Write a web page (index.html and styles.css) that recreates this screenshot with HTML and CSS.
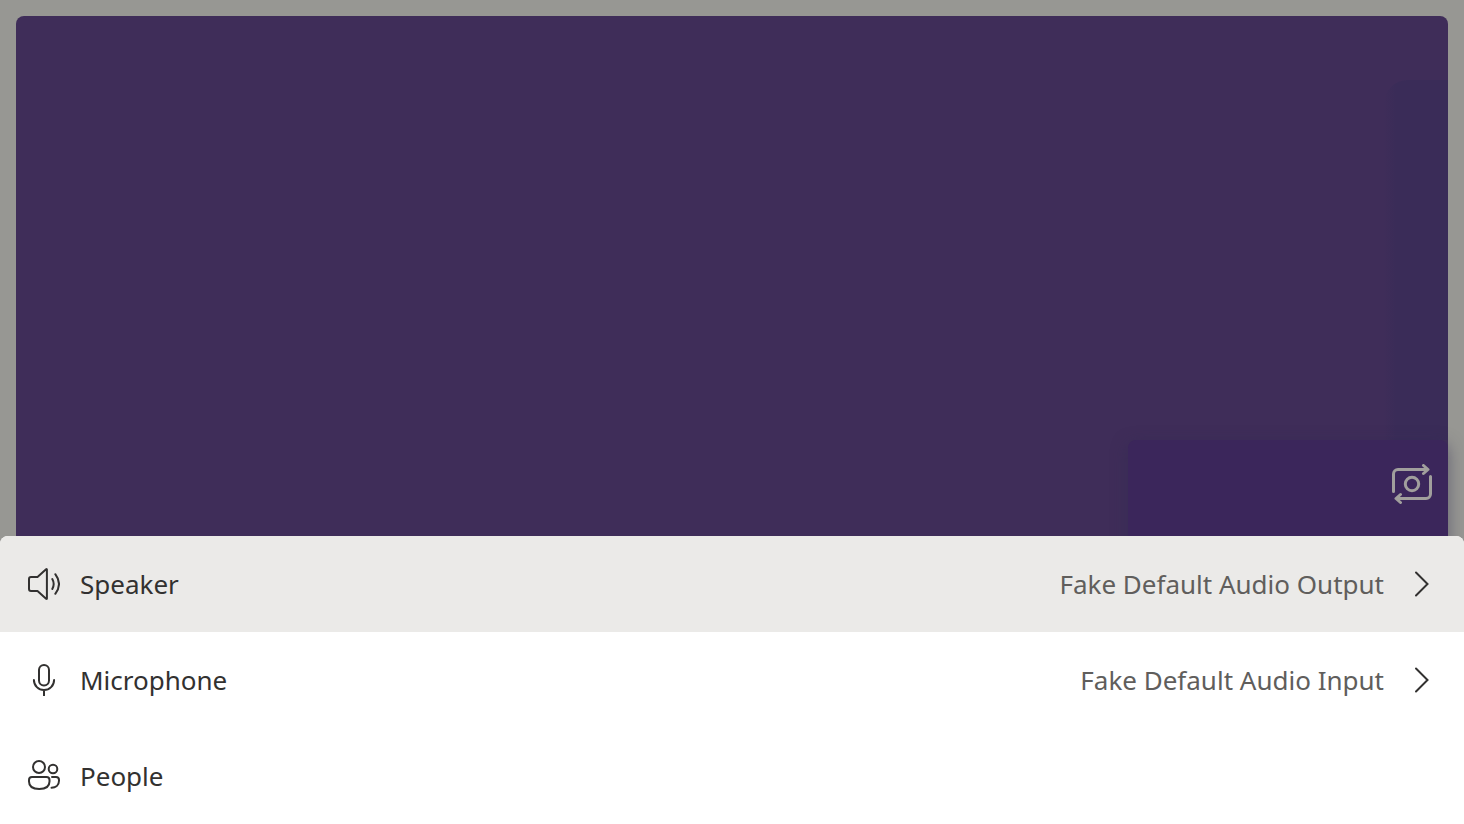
FILE: index.html
```
<!DOCTYPE html>
<html lang="en">
<head>
<meta charset="utf-8">
<meta name="viewport" content="width=device-width, initial-scale=1">
<title>Call</title>
<link rel="stylesheet" href="styles.css">
</head>
<body>
<main class="call">
  <section class="video" aria-label="Remote video">
    <div class="video-edge"></div>
    <div class="preview">
      <button class="flip" type="button" aria-label="Switch camera">
        <svg class="flip-icon" viewBox="0 0 40 40" aria-hidden="true">
          <path d="M1.500 27.500V10a4.500 4.500 0 0 1 4.500-4.500h29M31.500 1.500l4.500 4-4.500 4M38.500 12.500V30a4.500 4.500 0 0 1-4.500 4.500H5M8.500 30.500l-4.500 4 4.500 4"/>
          <circle cx="20" cy="20" r="6.700"/>
        </svg>
      </button>
    </div>
  </section>
</main>
<div class="sheet" role="menu">
  <button class="row row-active" type="button" role="menuitem">
    <svg class="icon" viewBox="0 0 32 32" aria-hidden="true">
      <path d="M18.900 1.600v28.800q0 .9-.8.300L9.500 23H3q-2 0-2-2V11q0-2 2-2h6.500l8.600-7.700q.8-.6.8.3Z"/>
      <path d="M24.300 11q2.800 5 0 10M27.300 6.200q7.400 9.800 0 19.600"/>
    </svg>
    <span class="label">Speaker</span>
    <span class="value">Fake Default Audio Output</span>
    <svg class="chevron" viewBox="0 0 16 28" aria-hidden="true"><path d="M2 2.500L13.500 14 2 25.500"/></svg>
  </button>
  <button class="row" type="button" role="menuitem">
    <svg class="icon" viewBox="0 0 32 32" aria-hidden="true">
      <rect x="11" y="1" width="10" height="20.500" rx="5"/>
      <path d="M5.900 16a10.100 10.100 0 0 0 20.200 0M16 26.200V31.500"/>
    </svg>
    <span class="label">Microphone</span>
    <span class="value">Fake Default Audio Input</span>
    <svg class="chevron" viewBox="0 0 16 28" aria-hidden="true"><path d="M2 2.500L13.500 14 2 25.500"/></svg>
  </button>
  <button class="row" type="button" role="menuitem">
    <svg class="icon" viewBox="0 0 32 32" aria-hidden="true">
      <circle cx="11" cy="7" r="6"/>
      <circle cx="25" cy="9" r="4.300"/>
      <path d="M4 17H18.500q3 0 3 3v1.500C21.500 26.500 17.500 29 11.200 29S1 26.500 1 21.500V20q0-3 3-3ZM24 17H28q3 0 3 3v.8c0 4.600-3.500 6.900-7.500 6.900"/>
    </svg>
    <span class="label">People</span>
  </button>
</div>
</body>
</html>
```
FILE: styles.css
```
* {
  box-sizing: border-box;
}

body {
  margin: 0;
  height: 100vh;
  overflow: hidden;
  background: #979793;
  color: #323130;
  font-family: "Segoe UI", "Noto Sans", "Open Sans", sans-serif;
}

button {
  border: 0;
  margin: 0;
  background: none;
  color: inherit;
  font: inherit;
}

.call {
  display: flex;
  height: 100%;
  padding: 16px;
}

.video {
  position: relative;
  flex: 1;
  border-radius: 8px;
  background: #3f2d59;
}

.video-edge {
  position: absolute;
  top: 64px;
  right: 0;
  width: 64px;
  height: 360px;
  border-radius: 24px 0 0 0;
  background: linear-gradient(to right, #3f2d59, #3a2c58 12px);
}

.preview {
  position: absolute;
  top: 424px;
  right: 0;
  bottom: 0;
  display: flex;
  justify-content: flex-end;
  align-items: flex-start;
  width: 320px;
  padding: 24px 16px;
  border-radius: 8px;
  background: #3b265b;
  box-shadow: 0 4px 16px rgba(48, 44, 80, 0.5);
}

.flip {
  display: flex;
  padding: 0;
}

.flip-icon {
  width: 40px;
  height: 40px;
  fill: none;
  stroke: #a19f9d;
  stroke-width: 3;
  stroke-linecap: round;
  stroke-linejoin: round;
}

.sheet {
  position: absolute;
  right: 0;
  bottom: 0;
  left: 0;
  overflow: hidden;
  border-radius: 8px 8px 0 0;
  background: #fff;
}

.row {
  display: flex;
  align-items: center;
  width: 100%;
  height: 96px;
  padding: 0 34px 0 28px;
  font-size: 26px;
  line-height: 36px;
  text-align: left;
}

.row-active {
  background: #ebeae8;
}

.icon {
  width: 32px;
  height: 32px;
  margin-right: 20px;
  fill: none;
  stroke: #323130;
  stroke-width: 2;
  stroke-linecap: round;
  stroke-linejoin: round;
}

.label {
  flex: 1;
}

.value {
  margin-right: 30px;
  color: #605e5c;
}

.chevron {
  width: 16px;
  height: 28px;
  fill: none;
  stroke: #323130;
  stroke-width: 2;
  stroke-linecap: round;
}
```
